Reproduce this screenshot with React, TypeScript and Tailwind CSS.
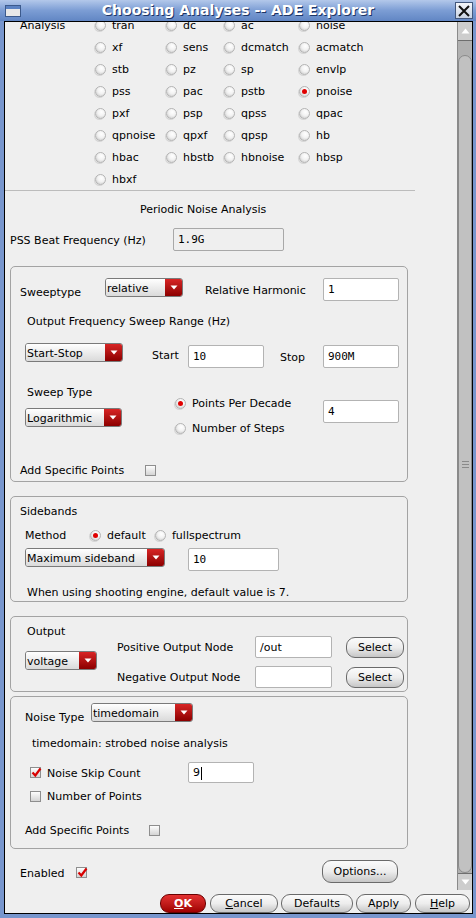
import React from "react"

const rows = [
  ["tran", "dc", "ac", "noise"],
  ["xf", "sens", "dcmatch", "acmatch"],
  ["stb", "pz", "sp", "envlp"],
  ["pss", "pac", "pstb", "pnoise"],
  ["pxf", "psp", "qpss", "qpac"],
  ["qpnoise", "qpxf", "qpsp", "hb"],
  ["hbac", "hbstb", "hbnoise", "hbsp"],
  ["hbxf"],
]
const colW = ["w-[71px]", "w-[58px]", "w-[75px]", "w-[80px]"]

function Radio({ on }: { on?: boolean }) {
  return (
    <span className="flex h-[11px] w-[11px] shrink-0 items-center justify-center rounded-full border border-[#b4b4b4] bg-[radial-gradient(circle_at_60%_35%,#ffffff_0%,#f2f2f2_45%,#c4c4c4_100%)] shadow-[-1px_1px_0_#d6d6d6]">
      {on && <span className="h-[5px] w-[5px] rounded-full bg-[#e00000]" />}
    </span>
  )
}

function Checkbox({ on, className = "" }: { on?: boolean; className?: string }) {
  return (
    <span className={`relative block h-[11px] w-[11px] shrink-0 border border-[#8e8e8e] bg-gradient-to-b from-[#fdfdfd] to-[#d4d4d4] ${className}`}>
      {on && (
        <svg className="absolute left-[0px] top-[-1px]" width="11" height="11" viewBox="0 0 11 11">
          <path d="M1.5 5.5 L4.3 8.5 L9.5 1.5" fill="none" stroke="#d80000" strokeWidth="2.2" />
        </svg>
      )}
    </span>
  )
}

function Dropdown({ label, className = "" }: { label: string; className?: string }) {
  return (
    <div className={`flex h-[19px] shrink-0 overflow-hidden rounded-[3px] border border-[#7a7a7a] ${className}`}>
      <div className="flex flex-1 items-center bg-gradient-to-b from-[#ffffff] to-[#dadada] pl-[1px] pt-px leading-none">{label}</div>
      <div className="flex w-[17px] items-center justify-center bg-gradient-to-b from-[#d82424] to-[#8c0000]">
        <svg width="8" height="5" viewBox="0 0 8 5">
          <path d="M0.5 0.5 L7.5 0.5 L4 4.5 Z" fill="#ffffff" />
        </svg>
      </div>
    </div>
  )
}

function Input({
  value,
  className = "",
  mono = true,
  cursor,
  disabled,
}: {
  value: string
  className?: string
  mono?: boolean
  cursor?: boolean
  disabled?: boolean
}) {
  return (
    <div
      className={`flex shrink-0 items-center rounded-[2px] border pl-[4px] pt-px ${
        disabled ? "border-[#a8a8a8] bg-[#efefef]" : "border-[#b3b3b3] bg-white"
      } ${mono ? "font-['DejaVu_Sans_Mono',monospace]" : ""} ${className}`}
    >
      {value}
      {cursor && <span className="ml-[1px] h-[13px] w-px bg-black" />}
    </div>
  )
}

function Btn({ children, className = "" }: { children: React.ReactNode; className?: string }) {
  return (
    <div
      className={`flex shrink-0 items-center justify-center rounded-[9px] border border-[#6a6a6a] bg-gradient-to-b from-[#fbfbfb] via-[#ededed] to-[#c6c6c6] pt-px ${className}`}
    >
      {children}
    </div>
  )
}

export default function App() {
  return (
    <div className="flex h-[918px] w-[476px] flex-col bg-[#7896cd] font-['DejaVu_Sans',sans-serif] text-[11px] leading-[14px] text-black">
      {/* title bar */}
      <div className="flex h-[21px] shrink-0 items-center bg-gradient-to-b from-[#b3c8ea] via-[#7c9dd4] to-[#6186c4]">
        <div className="ml-[5px] h-[12px] w-[16px] border border-[#3c5a8c] bg-[#e8e8e8]">
          <div className="h-[3px] bg-[#5b82c2]" />
        </div>
        <div className="flex-1 text-center text-[14px] font-bold leading-[17px] text-white [text-shadow:1px_1px_0_#1d3566]">
          Choosing Analyses -- ADE Explorer
        </div>
        <div className="mr-[3px] flex h-[17px] w-[18px] items-center justify-center border border-[#42577c] bg-gradient-to-b from-[#f4f6fa] to-[#c9d3e3]">
          <svg width="12" height="12" viewBox="0 0 12 12">
            <path d="M1 1 L11 11 M11 1 L1 11" stroke="#111" strokeWidth="2" />
          </svg>
        </div>
      </div>

      <div className="flex h-[893px] shrink-0">
        <div className="w-[4px]" />
        <div className="flex w-[469px] flex-col border border-black bg-[#efefef]">
          <div className="flex h-[868px] shrink-0">
            {/* scrolled content */}
            <div className="h-full w-[452px] overflow-hidden">
              <div className="-mt-[8px]">
                {rows.map((r, i) => (
                  <div key={i} className="flex h-[22px] items-center pt-px">
                    <div className="w-[90px] pl-[15px]">{i === 0 ? "Analysis" : ""}</div>
                    {r.map((name, j) => (
                      <div key={name} className={`flex items-center gap-[6px] ${colW[j]}`}>
                        <Radio on={name === "pnoise"} />
                        <span>{name}</span>
                      </div>
                    ))}
                  </div>
                ))}

                <div className="h-px w-[410px] bg-[#bcbcbc]" />
                <div className="mt-[12px] h-[13px] pl-[135px]">Periodic Noise Analysis</div>

                <div className="mt-[12px] flex items-center">
                  <div className="w-[168px] pl-[5px] pt-[2px]">PSS Beat Frequency (Hz)</div>
                  <Input value="1.9G" disabled className="h-[23px] w-[111px]" />
                </div>

                {/* sweep box */}
                <div className="ml-[5px] mt-[15px] h-[216px] w-[398px] rounded-[5px] border border-[#a3a3a3]">
                  <div className="mt-[11px] flex items-start">
                    <div className="ml-[9px] mt-[8px] w-[85px]">Sweeptype</div>
                    <Dropdown label="relative" className="w-[78px]" />
                    <div className="ml-[22px] mt-[6px] w-[118px]">Relative Harmonic</div>
                    <Input value="1" className="h-[23px] w-[76px]" />
                  </div>
                  <div className="ml-[16px] mt-[14px] h-[13px]">Output Frequency Sweep Range (Hz)</div>
                  <div className="mt-[15px] flex items-start">
                    <Dropdown label="Start-Stop" className="ml-[14px] w-[98px]" />
                    <div className="ml-[29px] mt-[6px] w-[36px]">Start</div>
                    <Input value="10" className="mt-[2px] h-[23px] w-[76px]" />
                    <div className="ml-[16px] mt-[8px] w-[43px]">Stop</div>
                    <Input value="900M" className="mt-[2px] h-[23px] w-[76px]" />
                  </div>
                  <div className="mt-[17px] flex items-start">
                    <div className="ml-[14px] w-[150px]">
                      <div className="pl-[2px] pt-px">Sweep Type</div>
                      <Dropdown label="Logarithmic" className="mt-[8px] w-[97px]" />
                    </div>
                    <div className="w-[148px]">
                      <div className="mt-[11px] flex items-center gap-[6px]">
                        <Radio on />
                        <span className="pt-px">Points Per Decade</span>
                      </div>
                      <div className="mt-[10px] flex items-center gap-[6px]">
                        <Radio />
                        <span className="pt-px">Number of Steps</span>
                      </div>
                    </div>
                    <Input value="4" className="mt-[15px] h-[23px] w-[76px]" />
                  </div>
                  <div className="mt-[27px] flex items-center">
                    <div className="ml-[9px] w-[125px] pt-px">Add Specific Points</div>
                    <Checkbox />
                  </div>
                </div>

                {/* sidebands box */}
                <div className="ml-[5px] mt-[14px] h-[106px] w-[398px] rounded-[5px] border border-[#a3a3a3]">
                  <div className="ml-[9px] mt-[8px] h-[13px]">Sidebands</div>
                  <div className="mt-[9px] flex items-center">
                    <div className="ml-[14px] w-[65px] pt-[2px]">Method</div>
                    <div className="flex w-[65px] items-center gap-[6px]">
                      <Radio on />
                      <span className="pt-px">default</span>
                    </div>
                    <div className="flex items-center gap-[6px]">
                      <Radio />
                      <span className="pt-px">fullspectrum</span>
                    </div>
                  </div>
                  <div className="mt-[5px] flex items-start">
                    <Dropdown label="Maximum sideband" className="ml-[14px] w-[140px]" />
                    <Input value="10" className="ml-[23px] h-[23px] w-[91px]" />
                  </div>
                  <div className="ml-[16px] mt-[15px]">When using shooting engine, default value is 7.</div>
                </div>

                {/* output box */}
                <div className="ml-[5px] mt-[14px] flex h-[76px] w-[398px] items-start rounded-[5px] border border-[#a3a3a3]">
                  <div className="ml-[14px] w-[92px]">
                    <div className="mt-[8px] h-[13px] pl-[2px]">Output</div>
                    <Dropdown label="voltage" className="mt-[13px] w-[72px]" />
                  </div>
                  <div className="w-[138px]">
                    <div className="mt-[24px]">Positive Output Node</div>
                    <div className="mt-[16px]">Negative Output Node</div>
                  </div>
                  <div className="w-[91px]">
                    <Input value="/out" mono={false} className="mt-[19px] h-[22px] w-[77px]" />
                    <Input value="" className="mt-[8px] h-[22px] w-[77px]" />
                  </div>
                  <div>
                    <Btn className="mt-[20px] h-[21px] w-[58px]">Select</Btn>
                    <Btn className="mt-[9px] h-[21px] w-[58px]">Select</Btn>
                  </div>
                </div>

                {/* noise box */}
                <div className="ml-[5px] mt-[4px] h-[153px] w-[398px] rounded-[5px] border border-[#a3a3a3]">
                  <div className="mt-[6px] flex items-start">
                    <div className="ml-[14px] mt-[8px] w-[66px]">Noise Type</div>
                    <Dropdown label="timedomain" className="w-[102px]" />
                  </div>
                  <div className="ml-[21px] mt-[11px] pt-px">timedomain: strobed noise analysis</div>
                  <div className="mt-[11px] flex items-center">
                    <div className="ml-[19px] flex w-[158px] items-center gap-[6px]">
                      <Checkbox on />
                      <span className="pt-[2px]">Noise Skip Count</span>
                    </div>
                    <Input value="9" mono={false} cursor className="h-[21px] w-[66px]" />
                  </div>
                  <div className="ml-[19px] mt-[6px] flex items-center gap-[6px]">
                    <Checkbox />
                    <span className="pt-px">Number of Points</span>
                  </div>
                  <div className="mt-[19px] flex items-center">
                    <div className="ml-[14px] w-[124px] pt-px">Add Specific Points</div>
                    <Checkbox />
                  </div>
                </div>

                <div className="mt-[11px] flex items-start">
                  <div className="ml-[15px] mt-[7px] w-[56px]">Enabled</div>
                  <Checkbox on className="mt-[7px]" />
                  <Btn className="ml-[235px] h-[23px] w-[76px]">Options...</Btn>
                </div>
              </div>
            </div>

            {/* scrollbar */}
            <div className="flex w-[15px] flex-col border-l border-[#8a8a8a] bg-[#b0b0b0]">
              <div className="flex h-[19px] items-center justify-center border-b border-[#6e6e6e] bg-[#cdcdcd]">
                <svg width="9" height="6" viewBox="0 0 9 6">
                  <path d="M0.5 5.5 L8.5 5.5 L4.5 0.5 Z" fill="#ffffff" />
                </svg>
              </div>
              <div className="flex flex-1 flex-col pt-[14px]">
                <div className="flex flex-1 flex-col items-center justify-center gap-[2px] rounded-[7px] border border-[#8a8a8a] bg-[#c1c1c1]">
                  <div className="h-px w-[7px] bg-[#8a8a8a]" />
                  <div className="h-px w-[7px] bg-[#8a8a8a]" />
                  <div className="h-px w-[7px] bg-[#8a8a8a]" />
                </div>
              </div>
              <div className="flex h-[17px] items-center justify-center border-t border-[#6e6e6e] bg-[#cdcdcd]">
                <svg width="9" height="6" viewBox="0 0 9 6">
                  <path d="M0.5 0.5 L8.5 0.5 L4.5 5.5 Z" fill="#ffffff" />
                </svg>
              </div>
            </div>
          </div>

          {/* dialog buttons */}
          <div className="flex h-[23px] shrink-0 items-start pl-[155px] pt-[4px]">
            <div className="flex h-[19px] w-[46px] items-center justify-center rounded-[9px] border border-[#6a0000] bg-gradient-to-b from-[#e43030] to-[#a00000] pt-px font-bold text-white">
              <span className="underline">O</span>K
            </div>
            <Btn className="ml-[4px] h-[19px] w-[68px]">
              <span className="underline">C</span>ancel
            </Btn>
            <Btn className="ml-[3px] h-[19px] w-[72px]">Defaults</Btn>
            <Btn className="ml-[3px] h-[19px] w-[55px]">Apply</Btn>
            <Btn className="ml-[4px] h-[19px] w-[55px]">
              <span className="underline">H</span>elp
            </Btn>
          </div>
        </div>
        <div className="w-[3px]" />
      </div>
      <div className="h-[4px] shrink-0" />
    </div>
  )
}
